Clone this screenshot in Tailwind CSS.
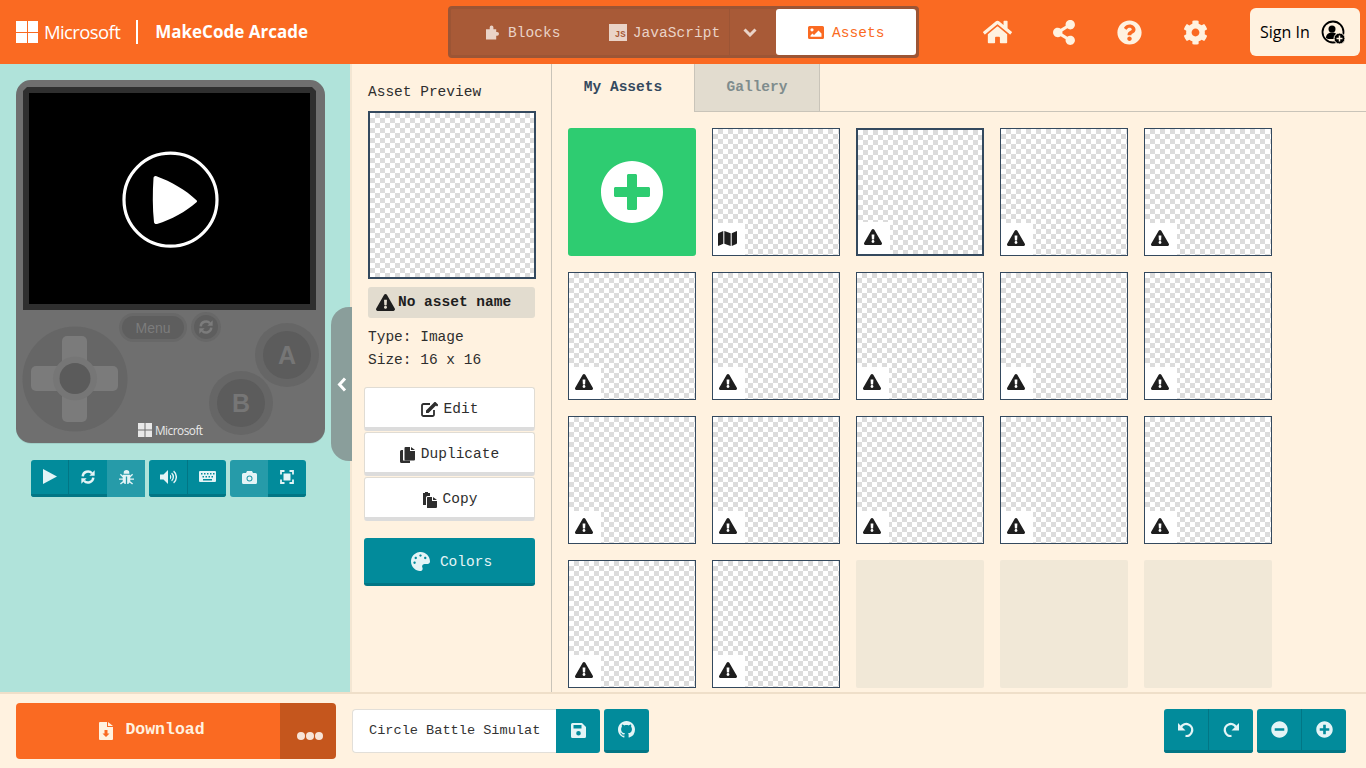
<!DOCTYPE html>
<html lang="en">
<head>
    <meta charset="UTF-8">
    <meta name="viewport" content="width=device-width, initial-scale=1.0">
    <title>MakeCode Arcade</title>
    <script src="https://cdn.jsdelivr.net/npm/@tailwindcss/browser@4"></script>
</head>
<body class="w-[1366px] h-[768px] overflow-hidden bg-[#fff2e0] font-['Liberation_Mono',monospace] text-[14.5px] text-[#2e2e2e]">
    <svg class="hidden">
        <symbol id="warn" viewBox="0 0 576 512"><path fill="currentColor" d="M569.517 440.013C587.975 472.007 564.806 512 527.94 512H48.054c-36.937 0-59.999-40.055-41.577-71.987L246.423 24.035c18.467-32.009 64.72-31.951 83.154 0l239.94 416.978zM288 354c-25.405 0-46 20.595-46 46s20.595 46 46 46 46-20.595 46-46-20.595-46-46-46zm-43.673-165.346l7.418 136c.347 6.364 5.609 11.346 11.982 11.346h48.546c6.373 0 11.635-4.982 11.982-11.346l7.418-136c.375-6.874-5.098-12.654-11.982-12.654h-63.383c-6.884 0-12.356 5.78-11.981 12.654z"/></symbol>
        <symbol id="map" viewBox="0 0 576 512"><path fill="currentColor" d="M0 117.66v346.32c0 11.32 11.43 19.06 21.94 14.86L160 416V32L20.12 87.95A32.006 32.006 0 0 0 0 117.66zM192 416l192 64V96L192 32v384zM554.06 33.16L416 96v384l139.88-55.95A31.996 31.996 0 0 0 576 394.34V48.02c0-11.32-11.43-19.06-21.94-14.86z"/></symbol>
        <symbol id="undo" viewBox="0 0 16 16"><path fill="currentColor" d="M0 2v7.500h7.500z"/><path fill="none" stroke="currentColor" stroke-width="2.300" d="M3 6a6 6 0 1 1 4.500 9"/></symbol>
        <symbol id="sync" viewBox="0 0 24 24"><path fill="none" stroke="currentColor" stroke-width="3.6" d="M4 11a8 8 0 0 1 14-4.500M20 13a8 8 0 0 1-14 4.500"/><path fill="currentColor" d="M22 2v8h-8zM2 22v-8h8z"/></symbol>
    </svg>

    <!-- top bar -->
    <header class="h-16 bg-[#fa6a22] flex items-center text-white relative">
        <div class="flex items-center pl-4 w-[448px] font-['Open_Sans',sans-serif]">
            <div class="w-[22px] h-[22px] grid grid-cols-2 gap-px">
                <span class="bg-white"></span><span class="bg-white"></span><span class="bg-white"></span><span class="bg-white"></span>
            </div>
            <span class="ml-[6px] text-[18.5px] tracking-[-0.6px]">Microsoft</span>
            <span class="w-0.5 h-6 bg-white ml-[16px] mr-[17px]"></span>
            <span class="text-[17px] font-bold">MakeCode Arcade</span>
        </div>
        <nav class="w-[471px] h-[52px] bg-[#a85a37] border-[3px] border-[#9c5535] rounded-[4px] flex text-[#ead3c7] tracking-[0.05px]">
            <div class="w-[139px] flex items-center pl-[35px] gap-[9px]">
                <svg class="w-[13px] h-[16px]" viewBox="0 0 14 16"><path fill="currentColor" d="M0 5h4V3a2 2 0 0 1 4 0v2h3v3h1a2 2 0 0 1 0 4h-1v4H0z"/></svg>
                <span class="mt-1">Blocks</span>
            </div>
            <div class="w-[140px] flex items-center pl-[19px] gap-[6px]">
                <span class="w-[18px] h-[17px] bg-[#ead3c7] text-[#a85a37] text-[9px] leading-none font-bold flex items-end justify-end pr-px pb-px">JS</span>
                <span class="mt-1">JavaScript</span>
            </div>
            <div class="w-[47px] border-l border-[#9c5535] flex items-center justify-center pr-[6px]">
                <svg class="w-[14px] h-[9px]" viewBox="0 0 14 9"><path fill="none" stroke="currentColor" stroke-width="3" d="M1.500 1.500L7 7l5.500-5.500"/></svg>
            </div>
            <div class="w-[140px] bg-white rounded-[3px] text-[#fa6a22] flex items-center justify-center gap-[8px]">
                <svg class="w-[16px] h-[13px]" viewBox="0 0 16 13"><path fill="currentColor" fill-rule="evenodd" d="M1.500 0h13A1.500 1.500 0 0 1 16 1.500v10a1.500 1.500 0 0 1-1.500 1.500h-13A1.500 1.500 0 0 1 0 11.500v-10A1.500 1.500 0 0 1 1.500 0zM4 2.200a1.600 1.600 0 1 0 0 3.200a1.600 1.600 0 0 0 0-3.200zM2.500 10.800h11V7.500L10.500 4.500 6 9 4.500 7.500l-2 2z"/></svg>
                <span class="mt-1">Assets</span>
            </div>
        </nav>
        <div class="flex items-center text-[#fff2e0] ml-[64px]">
            <svg class="w-[29px] h-[26px] mr-[41px]" viewBox="0 0 576 512"><path fill="currentColor" d="M280.37 148.26L96 300.11V464a16 16 0 0 0 16 16l112.06-.29a16 16 0 0 0 15.92-16V368a16 16 0 0 1 16-16h64a16 16 0 0 1 16 16v95.64a16 16 0 0 0 16 16.05L464 480a16 16 0 0 0 16-16V300L295.67 148.26a12.19 12.19 0 0 0-15.3 0zM571.6 251.47L488 182.56V44.05a12 12 0 0 0-12-12h-56a12 12 0 0 0-12 12v72.61L318.47 43a48 48 0 0 0-61 0L4.34 251.47a12 12 0 0 0-1.6 16.9l25.5 31A12 12 0 0 0 45.15 301l235.22-193.74a12.19 12.19 0 0 1 15.3 0L530.9 301a12 12 0 0 0 16.9-1.6l25.5-31a12 12 0 0 0-1.7-16.93z"/></svg>
            <svg class="w-[22px] h-[25px] mr-[42px]" viewBox="0 0 448 512"><path fill="currentColor" d="M352 320c-22.608 0-43.387 7.819-59.79 20.895l-102.486-64.054a96.551 96.551 0 0 0 0-41.683l102.486-64.054C308.613 184.181 329.392 192 352 192c53.019 0 96-42.981 96-96S405.019 0 352 0s-96 42.981-96 96c0 7.158.79 14.13 2.276 20.841L155.790 180.895C139.387 167.819 118.608 160 96 160c-53.019 0-96 42.981-96 96s42.981 96 96 96c22.608 0 43.387-7.819 59.790-20.895l102.486 64.054A96.301 96.301 0 0 0 256 416c0 53.019 42.981 96 96 96s96-42.981 96-96-42.981-96-96-96z"/></svg>
            <svg class="w-[25px] h-[25px] mr-[41px]" viewBox="0 0 512 512"><path fill="currentColor" d="M504 256c0 136.997-111.043 248-248 248S8 392.997 8 256C8 119.083 119.043 8 256 8s248 111.083 248 248zM262.655 90c-54.497 0-89.255 22.957-116.549 63.758-3.536 5.286-2.353 12.415 2.715 16.258l34.699 26.31c5.205 3.947 12.621 3.008 16.665-2.122 17.864-22.658 30.113-35.797 57.303-35.797 20.429 0 45.698 13.148 45.698 32.958 0 14.976-12.363 22.667-32.534 33.976C247.128 238.528 216 254.941 216 296v4c0 6.627 5.373 12 12 12h56c6.627 0 12-5.373 12-12v-1.333c0-28.462 83.186-29.647 83.186-106.667 0-58.002-60.165-102-116.531-102zM256 338c-25.365 0-46 20.635-46 46 0 25.364 20.635 46 46 46s46-20.636 46-46c0-25.365-20.635-46-46-46z"/></svg>
            <svg class="w-[25px] h-[25px]" viewBox="0 0 512 512"><path fill="currentColor" d="M487.4 315.700l-42.600-24.600c4.300-23.200 4.300-47 0-70.200l42.600-24.600c4.900-2.800 7.100-8.600 5.500-14-11.100-35.600-30-67.800-54.700-94.600-3.800-4.100-10-5.100-14.800-2.300L380.800 110c-17.900-15.400-38.500-27.300-60.800-35.100V25.800c0-5.600-3.900-10.500-9.400-11.700-36.700-8.200-74.300-7.800-109.200 0-5.500 1.200-9.400 6.100-9.400 11.700V75c-22.200 7.900-42.800 19.800-60.800 35.100L88.700 85.500c-4.900-2.800-11-1.900-14.800 2.300-24.700 26.700-43.600 58.900-54.700 94.600-1.700 5.400.6 11.200 5.500 14L67.300 221c-4.300 23.200-4.300 47 0 70.200l-42.600 24.600c-4.900 2.800-7.100 8.600-5.500 14 11.100 35.600 30 67.800 54.700 94.600 3.800 4.100 10 5.100 14.800 2.300l42.600-24.600c17.900 15.400 38.500 27.300 60.800 35.100v49.200c0 5.600 3.900 10.500 9.400 11.700 36.700 8.200 74.300 7.800 109.200 0 5.500-1.200 9.400-6.100 9.400-11.700v-49.200c22.200-7.900 42.800-19.800 60.800-35.100l42.600 24.600c4.900 2.800 11 1.900 14.800-2.300 24.700-26.700 43.600-58.900 54.700-94.600 1.500-5.500-.7-11.300-5.600-14.100zM256 336c-44.100 0-80-35.900-80-80s35.900-80 80-80 80 35.900 80 80-35.900 80-80 80z"/></svg>
        </div>
        <div class="ml-[42px] w-[110px] h-12 bg-[#fff2e0] rounded-[6px] flex items-center pl-[10px] gap-[11px] text-black font-['Open_Sans',sans-serif] text-[16px]">
            <span>Sign In</span>
            <svg class="w-[25px] h-[25px]" viewBox="0 0 25 25"><circle cx="12" cy="12" r="10.500" fill="none" stroke="#000" stroke-width="1.800"/><circle cx="11" cy="9" r="3.500"/><path d="M5 18c0-4 3-5.500 6-5.500 2 0 3 .5 4 1l-2 5.500H7z"/><circle cx="18.500" cy="18.500" r="5.500" fill="#000" stroke="#fff2e0"/><path stroke="#fff2e0" stroke-width="1.500" d="M15.500 18.500h6M18.500 15.500v6"/></svg>
        </div>
    </header>

    <main class="flex h-[628px]">
        <!-- simulator -->
        <section class="relative w-[352px] shrink-0 bg-[#b0e3da] border-r-2 border-[#f3e6d3] pt-4 pl-4 flex flex-col items-start">
            <svg class="w-[310px] h-[365px] shrink-0" viewBox="16 80 310 365" font-family="Liberation Sans, sans-serif">
                <rect x="16" y="80" width="309" height="364" rx="15" fill="#a0d0c8"/>
                <path d="M16 95a15 15 0 0 1 15-15h279a15 15 0 0 1 15 15v334a15 15 0 0 1-15 14H31a15 15 0 0 1-15-14z" fill="#6f6f6f"/>
                <path d="M27 87h285l4 4v219H23V91z" fill="#2f2f2f"/>
                <rect x="29" y="93" width="281" height="211" fill="#000"/>
                <circle cx="170.500" cy="199.700" r="46.500" fill="none" stroke="#fff" stroke-width="3.200"/>
                <path d="M153.500 178c.3-1.500 1.500-2.300 3-1.700 15 5.500 29 13.500 40 24 .7.7.7 1.300 0 2-11 9.500-25 17.500-39.500 21.700-1.500.4-2.700-.2-3-1.700-1.500-14-1.500-30-.5-44.300z" fill="#fff"/>
                <rect x="119" y="313" width="68" height="29" rx="14.500" fill="#686868"/>
                <rect x="122" y="316" width="62" height="23" rx="11.500" fill="#5e5e5e"/>
                <text x="153" y="332.500" text-anchor="middle" font-size="14" fill="#7c7c7c">Menu</text>
                <circle cx="206" cy="327" r="15" fill="#686868"/>
                <circle cx="206" cy="327" r="12" fill="#5e5e5e"/>
                <use href="#sync" x="198" y="319" width="16" height="16" color="#7c7c7c"/>
                <circle cx="75" cy="379" r="52.500" fill="#666"/>
                <rect x="62" y="336" width="25" height="86" rx="5" fill="#7b7b7b"/>
                <rect x="31" y="366" width="87" height="25" rx="5" fill="#7b7b7b"/>
                <circle cx="75" cy="378.500" r="22" fill="#767676"/>
                <circle cx="75" cy="378.500" r="15.500" fill="#5b5b5b"/>
                <circle cx="287" cy="355" r="32" fill="#666"/>
                <circle cx="287" cy="355" r="24" fill="#5c5c5c"/>
                <text x="287" y="364" text-anchor="middle" font-size="25" font-weight="700" fill="#767676">A</text>
                <circle cx="241" cy="403" r="32" fill="#666"/>
                <circle cx="241" cy="403" r="24" fill="#5c5c5c"/>
                <text x="241" y="412" text-anchor="middle" font-size="25" font-weight="700" fill="#767676">B</text>
                <path d="M138 423h6.500v6.500H138zM145.500 423h6.500v6.500h-6.500zM138 430.500h6.500v6.500H138zM145.500 430.500h6.500v6.500h-6.500z" fill="#e8e8e8"/>
                <text x="155" y="434.500" font-size="11.800" font-family="Open Sans, sans-serif" letter-spacing="-0.500" fill="#e8e8e8">Microsoft</text>
            </svg>
            <!-- simulator toolbar -->
            <div class="flex gap-1 mt-[15px] ml-[15px] text-[#e4f4f6]">
                <div class="flex rounded-l-[3px] overflow-hidden">
                    <div class="w-[38px] h-[37px] pb-px bg-[#028b9b] border-b-[3px] border-r border-[#027685] flex items-center justify-center"><svg class="w-[14px] h-[15px]" viewBox="0 0 14 15"><path fill="currentColor" d="M0 0l14 7.500L0 15z"/></svg></div>
                    <div class="w-[38px] h-[37px] pb-px bg-[#028b9b] border-b-[3px] border-[#027685] flex items-center justify-center"><svg class="w-[16px] h-[16px]"><use href="#sync"/></svg></div>
                    <div class="w-[38px] h-[37px] pb-[3px] bg-[#269ba9] flex items-center justify-center"><svg class="w-[15px] h-[15px]" viewBox="0 0 16 16"><path fill="currentColor" d="M5 3a3 3 0 0 1 6 0v1H5zM4 5h8v1l2-2 1 1-3 3v1h4v1.500h-4V12l3 2.500-1 1-2.700-2.300A3.500 3.500 0 0 1 8.700 15V7h-1.400v8a3.500 3.500 0 0 1-2.600-1.800L2 15.500l-1-1L4 12v-1.500H0V9h4V8L1 5l1-1 2 2z"/></svg></div>
                </div>
                <div class="flex rounded-[3px] overflow-hidden">
                    <div class="w-[39px] h-[37px] pb-px bg-[#028b9b] border-b-[3px] border-r border-[#027685] flex items-center justify-center"><svg class="w-[17px] h-[14px]" viewBox="0 0 17 14"><path fill="currentColor" d="M0 4.500h3.500L8 0v14L3.500 9.500H0zM10 4.500a3 3 0 0 1 0 5zM12 2.500a6 6 0 0 1 0 9l-.8-1.200a4.500 4.500 0 0 0 0-6.600zM14 .500a8.500 8.500 0 0 1 0 13l-.8-1.200a7 7 0 0 0 0-10.600z"/></svg></div>
                    <div class="w-[38px] h-[37px] pb-px bg-[#028b9b] border-b-[3px] border-[#027685] flex items-center justify-center"><svg class="w-[17px] h-[11px]" viewBox="0 0 17 11"><path fill="currentColor" fill-rule="evenodd" d="M1 0h15a1 1 0 0 1 1 1v9a1 1 0 0 1-1 1H1a1 1 0 0 1-1-1V1a1 1 0 0 1 1-1zM2 2v1.500h1.500V2zM5 2v1.500h1.500V2zM8 2v1.500h1.500V2zM11 2v1.500h1.500V2zM14 2v1.500h1.500V2zM3.500 5v1.500H5V5zM6.500 5v1.500H8V5zM9.500 5v1.500H11V5zM12.500 5v1.500H14V5zM4 8v1.500h9V8z"/></svg></div>
                </div>
                <div class="flex rounded-[3px] overflow-hidden">
                    <div class="w-[38px] h-[37px] pb-[3px] bg-[#269ba9] flex items-center justify-center"><svg class="w-[15px] h-[13px]" viewBox="0 0 15 13"><path fill="currentColor" fill-rule="evenodd" d="M1.500 2h2.500L5 0h5l1 2h2.500A1.500 1.500 0 0 1 15 3.500v8a1.500 1.500 0 0 1-1.500 1.500h-12A1.500 1.500 0 0 1 0 11.500v-8A1.500 1.500 0 0 1 1.500 2zM7.500 4.500a3 3 0 1 0 0 6a3 3 0 0 0 0-6zM7.500 5.500a2 2 0 1 1 0 4a2 2 0 0 1 0-4z"/></svg></div>
                    <div class="w-[38px] h-[37px] pb-px bg-[#028b9b] border-b-[3px] border-[#027685] flex items-center justify-center"><svg class="w-[14px] h-[14px]" viewBox="0 0 14 14"><path fill="none" stroke="currentColor" stroke-width="1.800" d="M1 4.500V1h3.500M9.500 1H13v3.500M13 9.500V13H9.500M4.500 13H1V9.500"/><rect x="3.500" y="3.500" width="7" height="7" fill="currentColor"/></svg></div>
                </div>
            </div>
            <!-- collapse handle -->
            <div class="absolute left-[331px] top-[243px] w-[21px] h-[154px] bg-[#8a9e9b] rounded-l-[18px] flex items-center justify-center text-white">
                <svg class="w-[10px] h-[15px]" viewBox="0 0 10 15"><path fill="none" stroke="currentColor" stroke-width="3" d="M8 1.500L2.500 7.500 8 13.500"/></svg>
            </div>
        </section>

        <!-- asset detail -->
        <section class="w-[200px] shrink-0 border-r border-[#c9c4b9] pl-[12px] pr-[16px]">
            <div class="pl-1 pt-[19px] leading-[18px] h-[47px]">Asset Preview</div>
            <div class="ml-1 w-[168px] h-[168px] border-2 border-[#34495e] bg-[conic-gradient(#dcdcdc_25%,#fff_0_50%,#dcdcdc_0_75%,#fff_0)] bg-[size:10px_10px]"></div>
            <div class="ml-1 mt-2 h-[31px] w-[167px] bg-[#e2dccf] rounded-[3px] flex items-center pl-2 gap-[3px] font-bold text-[#1e1e1e]">
                <svg class="w-[19px] h-[17px] shrink-0 -mt-px"><use href="#warn"/></svg>
                <span>No asset name</span>
            </div>
            <div class="pl-1 mt-[8px] leading-[23px]">Type: Image<br>Size: 16 x 16</div>
            <div class="mt-[15px] flex flex-col gap-px">
                <div class="h-11 pt-1 bg-white border border-[#e0dcd4] border-b-4 border-b-[#dcdcdc] rounded-[3px] flex items-center justify-center gap-[5px]">
                    <svg class="w-[18px] h-[15px]" viewBox="0 0 18 15"><path fill="none" stroke="currentColor" stroke-width="1.800" d="M9 2H2.500A1.500 1.500 0 0 0 1 3.500v9A1.500 1.500 0 0 0 2.500 14h9a1.500 1.500 0 0 0 1.500-1.500V8"/><path fill="currentColor" d="M5 8.500L12.500 1 15 3.500 7.500 11H5zM13.500 0h1L17 2.500v1l-1 1L12.500 1z"/></svg>
                    <span>Edit</span>
                </div>
                <div class="h-11 pt-1 bg-white border border-[#e0dcd4] border-b-4 border-b-[#dcdcdc] rounded-[3px] flex items-center justify-center gap-[6px]">
                    <svg class="w-[15px] h-[16px]" viewBox="0 0 15 16"><path fill="currentColor" d="M1.500 3H3v10.500h7V16H1.500A1.500 1.500 0 0 1 0 14.500v-10A1.500 1.500 0 0 1 1.500 3z"/><path fill="currentColor" d="M5.500 0H10v4h5v8.500a1 1 0 0 1-1 1H5.500a1 1 0 0 1-1-1V1a1 1 0 0 1 1-1zM11 0l4 3h-4z"/></svg>
                    <span>Duplicate</span>
                </div>
                <div class="h-11 pt-1 bg-white border border-[#e0dcd4] border-b-4 border-b-[#dcdcdc] rounded-[3px] flex items-center justify-center gap-[6px]">
                    <svg class="w-[15px] h-[16px]" viewBox="0 0 15 16"><path fill="currentColor" d="M1 1h2V0h3v1h2v3H5.500A1.500 1.500 0 0 0 4 5.500V13H1z"/><path fill="currentColor" d="M5.500 5H10v4h5v6a1 1 0 0 1-1 1H5.500a.5.500 0 0 1-.5-.5V5.500zM11 5l4 3h-4z"/></svg>
                    <span>Copy</span>
                </div>
            </div>
            <div class="mt-[17px] h-12 pt-[5px] pl-1 bg-[#028b9b] border-b-[3px] border-[#027685] rounded-[3px] text-[#e4f4f6] flex items-center justify-center gap-[10px]">
                <svg class="w-[19px] h-[19px] -mt-1" viewBox="0 0 512 512"><path fill="currentColor" d="M204.300 5C104.900 24.400 24.800 104.300 5.200 203.400c-37 187 131.700 326.400 258.800 306.700 41.200-6.400 61.400-54.600 42.500-91.700-23.100-45.400 9.900-98.400 60.900-98.400h79.700c35.800 0 64.800-29.600 64.900-65.300C511.500 97.100 368.100-26.900 204.300 5zM96 320c-17.700 0-32-14.300-32-32s14.300-32 32-32 32 14.300 32 32-14.300 32-32 32zm32-128c-17.700 0-32-14.300-32-32s14.300-32 32-32 32 14.300 32 32-14.300 32-32 32zm128-64c-17.700 0-32-14.300-32-32s14.300-32 32-32 32 14.300 32 32-14.300 32-32 32zm128 64c-17.700 0-32-14.300-32-32s14.300-32 32-32 32 14.300 32 32-14.300 32-32 32z"/></svg>
                <span>Colors</span>
            </div>
        </section>

        <!-- asset gallery -->
        <section class="flex-1 min-w-0">
            <div class="flex h-12 border-b border-[#c9c4b9] font-bold">
                <div class="w-[142px] h-12 flex items-center justify-center text-[#34495e] pb-px bg-[#fff2e0]">My Assets</div>
                <div class="w-[126px] h-[47px] bg-[#e2dccf] border-x border-[#c9c4b9] flex items-center justify-center text-[#7f8c8d]">Gallery</div>
            </div>
            <div id="grid" class="grid grid-cols-[repeat(5,128px)] gap-4 pl-4 pt-4">
                <div class="h-32 bg-[#2ecc71] rounded-[3px] flex items-center justify-center">
                    <svg class="w-[64px] h-[64px]" viewBox="0 0 512 512"><path fill="#fff" d="M256 8C119 8 8 119 8 256s111 248 248 248 248-111 248-248S393 8 256 8zm144 276c0 6.600-5.400 12-12 12h-92v92c0 6.600-5.400 12-12 12h-56c-6.600 0-12-5.400-12-12v-92h-92c-6.600 0-12-5.400-12-12v-56c0-6.600 5.400-12 12-12h92v-92c0-6.600 5.400-12 12-12h56c6.600 0 12 5.400 12 12v92h92c6.600 0 12 5.400 12 12v56z"/></svg>
                </div>
            </div>
        </section>
    </main>

    <!-- bottom bar -->
    <footer class="h-[76px] border-t-2 border-[#efdfc9] flex items-center text-[#e4f4f6]">
        <div class="ml-4 w-[320px] h-[56px] mt-[-1px] flex rounded-[4px] overflow-hidden font-bold text-[16.5px] text-[#fff2e0]">
            <div class="w-[264px] bg-[#fa6a22] flex items-center justify-center gap-[12px] pl-[8px]">
                <svg class="w-[14px] h-[18px]" viewBox="0 0 14 18"><path fill="currentColor" fill-rule="evenodd" d="M1 0h7v5h6v12a1 1 0 0 1-1 1H1a1 1 0 0 1-1-1V1a1 1 0 0 1 1-1zM9 0l5 4H9zM5.500 8v3.500H3.500L7 15l3.500-3.500H8.500V8z"/></svg>
                <span>Download</span>
            </div>
            <div class="w-[56px] bg-[#c5561d] flex items-end justify-center pb-[19px] pl-1 gap-px">
                <span class="w-2 h-2 rounded-full bg-[#f8e4d8]"></span><span class="w-2 h-2 rounded-full bg-[#f8e4d8]"></span><span class="w-2 h-2 rounded-full bg-[#f8e4d8]"></span>
            </div>
        </div>
        <div class="ml-4 flex h-11 mt-[-1px]">
            <div class="w-[204px] pt-px bg-white border border-[#e2dfd9] border-r-0 rounded-l-[4px] pl-4 flex items-center text-[13.6px] text-[#333] whitespace-nowrap overflow-hidden">Circle Battle Simulat</div>
            <div class="w-[44px] bg-[#028b9b] rounded-r-[3px] flex items-center justify-center">
                <svg class="w-[15px] h-[15px]" viewBox="0 0 15 15"><path fill="currentColor" fill-rule="evenodd" d="M1.500 0H11l4 4v9.500a1.500 1.500 0 0 1-1.500 1.500h-12A1.500 1.500 0 0 1 0 13.500v-12A1.500 1.500 0 0 1 1.500 0zM2.500 2v3.500h8V2zM7.500 8a2.300 2.300 0 1 0 0 4.600a2.300 2.300 0 0 0 0-4.600z"/></svg>
            </div>
            <div class="ml-1 w-[45px] bg-[#028b9b] border-b-[3px] border-[#027685] rounded-[3px] flex items-center justify-center">
                <svg class="w-[17px] h-[17px]" viewBox="0 0 16 16"><path fill="currentColor" d="M8 0C3.580 0 0 3.580 0 8c0 3.540 2.290 6.530 5.470 7.590.4.070.55-.17.55-.38 0-.19-.01-.82-.01-1.490-2.010.37-2.530-.49-2.690-.94-.09-.23-.48-.94-.82-1.130-.28-.15-.68-.52-.01-.53.63-.01 1.080.58 1.230.82.72 1.210 1.870.87 2.330.66.070-.52.28-.87.51-1.070-1.780-.2-3.640-.89-3.640-3.950 0-.87.31-1.590.82-2.150-.08-.2-.36-1.020.08-2.120 0 0 .67-.21 2.200.82.64-.18 1.320-.27 2-.27.68 0 1.360.09 2 .27 1.530-1.040 2.200-.82 2.200-.82.44 1.100.16 1.920.08 2.120.51.56.82 1.270.82 2.150 0 3.070-1.870 3.750-3.650 3.950.29.25.54.73.54 1.480 0 1.070-.01 1.930-.01 2.200 0 .21.15.46.55.38A8.013 8.013 0 0016 8c0-4.420-3.580-8-8-8z"/></svg>
            </div>
        </div>
        <div class="ml-auto mr-5 flex gap-1 h-11 mt-[-1px]">
            <div class="flex rounded-[3px] overflow-hidden">
                <div class="w-[45px] bg-[#028b9b] border-b-[3px] border-r border-[#027685] flex items-center justify-center"><svg class="w-4 h-4"><use href="#undo"/></svg></div>
                <div class="w-[44px] bg-[#028b9b] border-b-[3px] border-[#027685] flex items-center justify-center"><svg class="w-4 h-4 -scale-x-100"><use href="#undo"/></svg></div>
            </div>
            <div class="flex rounded-[3px] overflow-hidden">
                <div class="w-[45px] bg-[#028b9b] border-b-[3px] border-r border-[#027685] flex items-center justify-center"><svg class="w-[17px] h-[17px]" viewBox="0 0 512 512"><path fill="currentColor" d="M256 8C119 8 8 119 8 256s111 248 248 248 248-111 248-248S393 8 256 8zM124 296c-6.600 0-12-5.400-12-12v-56c0-6.600 5.400-12 12-12h264c6.600 0 12 5.400 12 12v56c0 6.600-5.400 12-12 12H124z"/></svg></div>
                <div class="w-[44px] bg-[#028b9b] border-b-[3px] border-[#027685] flex items-center justify-center"><svg class="w-[17px] h-[17px]" viewBox="0 0 512 512"><path fill="currentColor" d="M256 8C119 8 8 119 8 256s111 248 248 248 248-111 248-248S393 8 256 8zm144 276c0 6.600-5.400 12-12 12h-92v92c0 6.600-5.400 12-12 12h-56c-6.600 0-12-5.400-12-12v-92h-92c-6.600 0-12-5.400-12-12v-56c0-6.600 5.400-12 12-12h92v-92c0-6.600 5.400-12 12-12h56c6.600 0 12 5.400 12 12v92h92c6.600 0 12 5.400 12 12v56z"/></svg></div>
            </div>
        </div>
    </footer>

    <script>
        // gallery tiles: 1 map, 15 warnings, 3 empty slots
        const grid = document.getElementById('grid');
        const checker = 'bg-[conic-gradient(#dcdcdc_25%,#fff_0_50%,#dcdcdc_0_75%,#fff_0)] bg-[size:10px_10px]';
        function tile(icon, selected) {
            const border = selected ? 'border-2' : 'border';
            const size = icon === 'map' ? 'w-[19px] h-[17px]' : 'w-[18px] h-[16px]';
            return `<div class="relative h-32 ${border} border-[#34495e] ${checker}">
                <div class="absolute left-0 bottom-0 w-8 h-8 pr-[3px] pb-[2px] bg-white flex items-center justify-center text-[#1e1e1e]">
                    <svg class="${size}"><use href="#${icon}"/></svg>
                </div>
            </div>`;
        }
        let html = tile('map') + tile('warn', true);
        for (let i = 0; i < 14; i++) html += tile('warn');
        for (let i = 0; i < 3; i++) html += '<div class="h-32 bg-[#f1e8d7] rounded-[2px]"></div>';
        grid.insertAdjacentHTML('beforeend', html);
    </script>
</body>
</html>
